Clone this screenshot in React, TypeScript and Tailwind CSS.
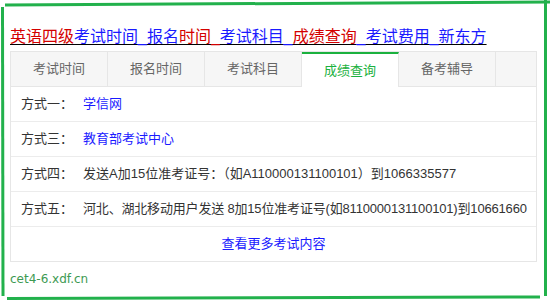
import React from "react";

const tabs = ["考试时间", "报名时间", "考试科目", "成绩查询", "备考辅导"];

export default function App() {
  const font = { fontFamily: '"Liberation Sans", Arial, "Noto Sans CJK SC", sans-serif' };
  return (
    <div className="relative w-[550px] h-[300px] bg-white overflow-hidden" style={font}>
      <div className="pl-[10px] pr-[13px] pt-[27px]">
        <div className="text-[16px] leading-[20px] h-[24px] whitespace-nowrap underline decoration-1 underline-offset-2">
          <span className="text-[#d40000]">英语四级</span>
          <span className="text-[#1a1aff]">考试时间_报名</span>
          <span className="text-[#d40000]">时间_</span>
          <span className="text-[#1a1aff]">考试科目_</span>
          <span className="text-[#d40000]">成绩查询</span>
          <span className="text-[#1a1aff]">_考试费用_新东方</span>
        </div>
        <div className="border border-[#e6e6e6] mt-0">
          <div className="flex h-[35px] bg-[#f6f6f6] border-b border-[#e6e6e6]">
            {tabs.map((t, i) => (
              <div
                key={t}
                className={
                  i === 3
                    ? "w-[97px] flex items-center justify-center text-[13px] text-[#1bb13e] bg-white border-r border-[#e6e6e6] border-t-2 border-t-[#1bb13e] -mb-px"
                    : "w-[97px] flex items-center justify-center text-[13px] text-[#666] border-r border-[#e6e6e6]"
                }
              >
                {t}
              </div>
            ))}
          </div>
          <div className="text-[13px] text-[#333]">
            <div className="h-[35px] flex items-center pl-[10px] border-b border-[#ececec]">
              <span className="w-[62px]">方式一：</span>
              <span className="text-[#1a1aff]">学信网</span>
            </div>
            <div className="h-[35px] flex items-center pl-[10px] border-b border-[#ececec]">
              <span className="w-[62px]">方式三：</span>
              <span className="text-[#1a1aff]">教育部考试中心</span>
            </div>
            <div className="h-[35px] flex items-center pl-[10px] border-b border-[#ececec]">
              <span className="w-[62px]">方式四：</span>
              <span>发送A加15位准考证号：（如A110000131100101）到1066335577</span>
            </div>
            <div className="h-[35px] flex items-center pl-[10px] border-b border-[#ececec] whitespace-nowrap">
              <span className="w-[62px] shrink-0">方式五：</span>
              <span className="tracking-[-0.18px]">河北、湖北移动用户发送 8加15位准考证号(如8110000131100101)到10661660</span>
            </div>
            <div className="h-[34px] flex items-center justify-center text-[#1a1aff]">查看更多考试内容</div>
          </div>
        </div>
        <div className="mt-[8px] text-[12px] text-[#3d9a52]" style={{ fontFamily: 'Tahoma, "DejaVu Sans", sans-serif' }}>cet4-6.xdf.cn</div>
      </div>
      <svg className="absolute inset-0 pointer-events-none" width="550" height="300" viewBox="0 0 550 300">
        <g stroke="#22b14c" strokeWidth="3" strokeLinecap="butt">
          <line x1="5" y1="5" x2="550" y2="2" />
          <line x1="2.5" y1="7" x2="3" y2="296" />
          <line x1="545.5" y1="0" x2="545.5" y2="296" />
          <line x1="7" y1="298.5" x2="540" y2="297" />
        </g>
      </svg>
    </div>
  );
}
